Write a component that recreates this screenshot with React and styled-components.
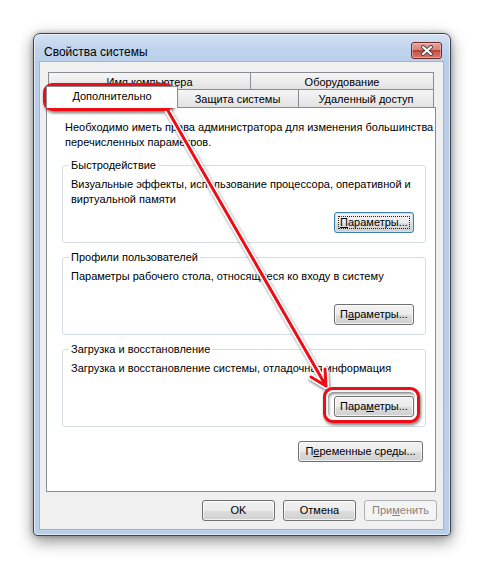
import React from "react";
import styled, { createGlobalStyle, css } from "styled-components";

const Global = createGlobalStyle`
  html, body { margin: 0; padding: 0; background: #ffffff; }
  body { font-family: "Liberation Sans", Arial, sans-serif; font-size: 11px; color: #000; }
  * { box-sizing: border-box; }
`;

const Page = styled.div`
  position: relative;
  width: 484px;
  height: 569px;
  padding: 33px 0 0 33px;
  overflow: hidden;
`;

const Window = styled.div`
  width: 418px;
  border: 1px solid #3b4654;
  border-radius: 7px 7px 4px 4px;
  background: linear-gradient(to bottom, #d3e2f4 0px, #c0d4ec 14px, #b9cfe9 28px, #bad0ea 100%);
  box-shadow: 0 5px 16px rgba(0, 0, 0, 0.45), 0 0 5px rgba(0, 0, 0, 0.25),
    inset 0 0 0 1px rgba(255, 255, 255, 0.55);
  display: flex;
  flex-direction: column;
`;

const TitleBar = styled.div`
  height: 28px;
  display: flex;
  align-items: flex-start;
  justify-content: space-between;
  padding: 0 8px 0 10px;
`;

const Title = styled.div`
  margin-top: 10px;
  font-size: 12px;
  line-height: 16px;
  color: #000;
`;

const CloseButton = styled.div`
  margin-top: 8px;
  width: 31px;
  height: 17px;
  border: 1px solid #6d2a25;
  border-radius: 3px;
  background: linear-gradient(
    to bottom,
    #e7a49c 0%,
    #d98279 45%,
    #b8463c 46%,
    #b8463c 60%,
    #c9594f 61%,
    #d9766c 100%
  );
  box-shadow: inset 0 0 0 1px rgba(255, 220, 215, 0.45);
  display: flex;
  align-items: center;
  justify-content: center;
`;

const Frame = styled.div`
  padding: 0 7px 6px 6px;
`;

const Client = styled.div`
  background: #f0f0f0;
  box-shadow: 0 0 0 1px #9fb4cf;
  padding: 10px 7px 8px 6px;
  display: flex;
  flex-direction: column;
`;

const TabRows = styled.div`
  display: flex;
  flex-direction: column;
  padding: 0 2px;
`;

const TabRow = styled.div`
  display: flex;
  height: ${(p) => p.$h}px;
  align-items: flex-end;
`;

const Tab = styled.div`
  width: ${(p) => p.$w}px;
  height: ${(p) => p.$h}px;
  border: 1px solid #898c95;
  border-bottom: none;
  ${(p) => (p.$last ? "" : "border-right: none;")}
  background: linear-gradient(to bottom, #f6f6f6 0%, #ececec 50%, #e2e2e2 100%);
  display: flex;
  align-items: center;
  justify-content: center;
  padding-top: 2px;
  white-space: nowrap;
  line-height: 15px;
  ${(p) =>
    p.$selected &&
    css`
      position: relative;
      z-index: 2;
      background: #ffffff;
      border-right: 1px solid #898c95;
      margin: 0 -2px -1px -2px;
      padding-top: 0;
      padding-bottom: 3px;
    `}
`;

const Panel = styled.div`
  height: 385px;
  background: #ffffff;
  border: 1px solid #898c95;
  padding: 12px 9px 0 15px;
  display: flex;
  flex-direction: column;
`;

const Intro = styled.div`
  line-height: 15px;
  padding-left: 3px;
  white-space: nowrap;
`;

const Group = styled.fieldset`
  margin: ${(p) => p.$mt}px 0 0 0;
  padding: 4px 11px 9px 6px;
  border: 1px solid #d5dfe5;
  border-radius: 3px;
  min-inline-size: 0;
  display: flex;
  flex-direction: column;
`;

const Legend = styled.legend`
  padding: 0 2px;
  line-height: 15px;
  color: #000;
`;

const GroupText = styled.div`
  height: 30px;
  line-height: 15px;
  padding-left: 2px;
  white-space: nowrap;
`;

const ButtonRow = styled.div`
  display: flex;
  justify-content: flex-end;
  margin-top: ${(p) => p.$mt || 0}px;
  margin-right: ${(p) => p.$mr || 0}px;
`;

const Button = styled.div`
  position: relative;
  width: ${(p) => p.$w}px;
  height: 21px;
  border: 1px solid #707070;
  border-radius: 3px;
  background: linear-gradient(to bottom, #f2f2f2 0%, #ebebeb 50%, #dddddd 51%, #cfcfcf 100%);
  box-shadow: inset 0 0 0 1px rgba(255, 255, 255, 0.7);
  display: flex;
  align-items: center;
  justify-content: center;
  line-height: 15px;
  white-space: nowrap;
  color: #000;
  ${(p) =>
    p.$focused &&
    css`
      border-color: #3c7fb1;
      box-shadow: inset 0 0 0 1px #c4e5f6;
      &::after {
        content: "";
        position: absolute;
        inset: 3px;
        border: 1px dotted #222;
      }
    `}
  ${(p) =>
    p.$disabled &&
    css`
      border-color: #adb2b5;
      background: #f4f4f4;
      box-shadow: none;
      color: #838383;
    `}
`;

const Footer = styled.div`
  display: flex;
  justify-content: flex-end;
  gap: 8px;
  margin-top: 8px;
  margin-right: -1px;
`;

const Overlay = styled.svg`
  position: absolute;
  left: 0;
  top: 0;
  pointer-events: none;
`;

const U = styled.u`
  text-decoration: underline;
  text-underline-offset: 1px;
`;

function Annotations() {
  const red = "#ec0c12";
  return (
    <Overlay width="484" height="569" viewBox="0 0 484 569">
      <defs>
        <filter id="sh" x="-20%" y="-20%" width="140%" height="140%">
          <feDropShadow dx="1" dy="2" stdDeviation="1.6" floodColor="#000" floodOpacity="0.55" />
        </filter>
      </defs>
      <g filter="url(#sh)" fill="none" strokeLinecap="round" strokeLinejoin="round">
        <path d="M167 109 L326 386 M311 377 L326 386 L325 369" stroke="#fff" strokeWidth="6" />
        <path d="M167 109 L326 386 M311 377 L326 386 L325 369" stroke={red} strokeWidth="3" />
        <rect x="44.5" y="84.5" width="129" height="25" rx="8" stroke={red} strokeWidth="3" />
        <rect x="47" y="87" width="124" height="20" rx="6" stroke="#fff" strokeWidth="1.6" />
        <rect x="324.5" y="388.5" width="94" height="33" rx="8" stroke={red} strokeWidth="3" />
        <rect x="327" y="391" width="89" height="28" rx="6" stroke="#fff" strokeWidth="1.6" />
      </g>
    </Overlay>
  );
}

export default function App() {
  return (
    <Page>
      <Global />
      <Window>
        <TitleBar>
          <Title>Свойства системы</Title>
          <CloseButton>
            <svg width="14" height="11" viewBox="0 0 14 11">
              <path d="M3 2 L11 9 M11 2 L3 9" stroke="#4a4a4a" strokeWidth="4" strokeLinecap="round" />
              <path d="M3 2 L11 9 M11 2 L3 9" stroke="#ffffff" strokeWidth="2" strokeLinecap="round" />
            </svg>
          </CloseButton>
        </TitleBar>
        <Frame>
          <Client>
            <TabRows>
              <TabRow $h={17}>
                <Tab $w={202} $h={17}>Имя компьютера</Tab>
                <Tab $w={184} $h={17} $last>Оборудование</Tab>
              </TabRow>
              <TabRow $h={18}>
                <Tab $w={132} $h={22} $selected>Дополнительно</Tab>
                <Tab $w={122} $h={18}>Защита системы</Tab>
                <Tab $w={136} $h={18} $last>Удаленный доступ</Tab>
              </TabRow>
            </TabRows>
            <Panel>
              <Intro>
                Необходимо иметь права администратора для изменения большинства
                <br />
                перечисленных параметров.
              </Intro>
              <Group $mt={8}>
                <Legend>Быстродействие</Legend>
                <GroupText>
                  Визуальные эффекты, использование процессора, оперативной и
                  <br />
                  виртуальной памяти
                </GroupText>
                <ButtonRow $mt={5}>
                  <Button $w={80} $focused>
                    <span><U>П</U>араметры...</span>
                  </Button>
                </ButtonRow>
              </Group>
              <Group $mt={7}>
                <Legend>Профили пользователей</Legend>
                <GroupText>Параметры рабочего стола, относящиеся ко входу в систему</GroupText>
                <ButtonRow $mt={5}>
                  <Button $w={80}>
                    <span>П<U>а</U>раметры...</span>
                  </Button>
                </ButtonRow>
              </Group>
              <Group $mt={7}>
                <Legend>Загрузка и восстановление</Legend>
                <GroupText>Загрузка и восстановление системы, отладочная информация</GroupText>
                <ButtonRow $mt={5}>
                  <Button $w={80}>
                    <span>Пара<U>м</U>етры...</span>
                  </Button>
                </ButtonRow>
              </Group>
              <ButtonRow $mt={14} $mr={3}>
                <Button $w={125}>
                  <span>П<U>е</U>ременные среды...</span>
                </Button>
              </ButtonRow>
            </Panel>
            <Footer>
              <Button $w={73}>OK</Button>
              <Button $w={73}>Отмена</Button>
              <Button $w={73} $disabled>
                <span>При<U>м</U>енить</span>
              </Button>
            </Footer>
          </Client>
        </Frame>
      </Window>
      <Annotations />
    </Page>
  );
}
